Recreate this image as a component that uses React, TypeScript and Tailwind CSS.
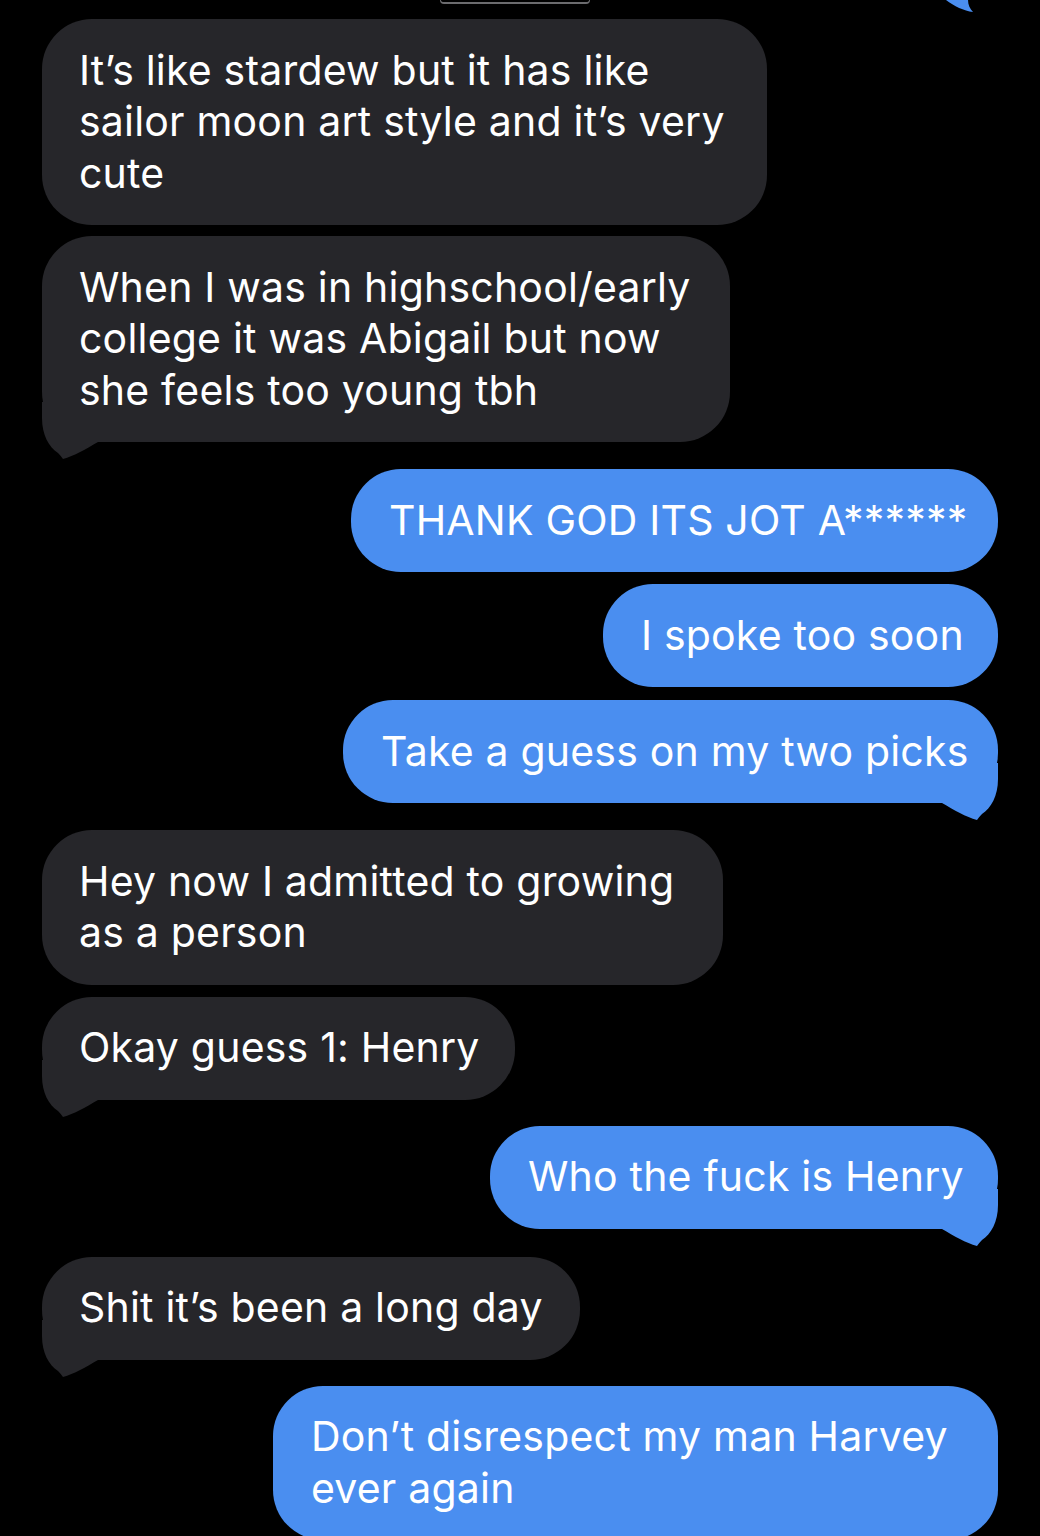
import React from "react";

const GRAY = "#26262a";
const BLUE = "#4a8ef0";

function Tail({ side, color }: { side: "left" | "right"; color: string }) {
  return (
    <svg
      width="60"
      height="60"
      viewBox="0 0 60 60"
      className={
        side === "left"
          ? "absolute left-0 bottom-[-20px]"
          : "absolute right-0 bottom-[-20px] -scale-x-100"
      }
    >
      <path
        d="M0 0 V16 C0 33 7 45 16 51 Q19 54 21 57 C32 54 44 47 56 40 H60 V0 Z"
        fill={color}
      />
    </svg>
  );
}

type Msg = {
  from: "them" | "me";
  lines: string[];
  width: number;
  tail?: boolean;
  gap: number;
};

const messages: Msg[] = [
  {
    from: "them",
    lines: ["It’s like stardew but it has like", "sailor moon art style and it’s very", "cute"],
    width: 725,
    gap: 0,
  },
  {
    from: "them",
    lines: ["When I was in highschool/early", "college it was Abigail but now", "she feels too young tbh"],
    width: 688,
    tail: true,
    gap: 11,
  },
  { from: "me", lines: ["THANK GOD ITS JOT A******"], width: 647, gap: 27 },
  { from: "me", lines: ["I spoke too soon"], width: 395, gap: 12 },
  { from: "me", lines: ["Take a guess on my two picks"], width: 655, tail: true, gap: 13 },
  {
    from: "them",
    lines: ["Hey now I admitted to growing", "as a person"],
    width: 681,
    gap: 27,
  },
  { from: "them", lines: ["Okay guess 1: Henry"], width: 473, tail: true, gap: 12 },
  { from: "me", lines: ["Who the fuck is Henry"], width: 508, tail: true, gap: 26 },
  { from: "them", lines: ["Shit it’s been a long day"], width: 538, tail: true, gap: 28 },
  {
    from: "me",
    lines: ["Don’t disrespect my man Harvey", "ever again"],
    width: 725,
    gap: 26,
  },
];

function Bubble({ m }: { m: Msg }) {
  const isMe = m.from === "me";
  const color = isMe ? BLUE : GRAY;
  return (
    <div
      className={`relative rounded-[50px] py-[25.75px] ${isMe ? "self-end pl-[38px] pr-[30px]" : "self-start pl-[37px] pr-[30px]"}`}
      style={{ width: m.width, backgroundColor: color, marginTop: m.gap }}
    >
      {m.tail && <Tail side={isMe ? "right" : "left"} color={color} />}
      <div className="relative text-white text-[41px] leading-[51.5px] whitespace-nowrap tracking-[0.2px] font-['Inter','Noto_Sans',sans-serif]">
        {m.lines.map((l, i) => (
          <div key={i}>{l}</div>
        ))}
      </div>
    </div>
  );
}

export default function App() {
  return (
    <div className="w-[1040px] h-[1536px] overflow-hidden bg-black">
      <div className="flex items-start h-[19px] pl-[440px] pr-[64px]">
        <div className="w-[150px] h-[4px] rounded-b-[10px] border-b-2 border-x border-[#6b6b6e]" />
        <svg width="30" height="14" viewBox="0 0 30 14" className="ml-auto">
          <path d="M0 0 H22 C22 5 24 9 27 12 C18 11 8 6 0 0 Z" fill={BLUE} />
        </svg>
      </div>
      <div className="flex flex-col px-[42px]">
        {messages.map((m, i) => (
          <Bubble key={i} m={m} />
        ))}
      </div>
    </div>
  );
}
